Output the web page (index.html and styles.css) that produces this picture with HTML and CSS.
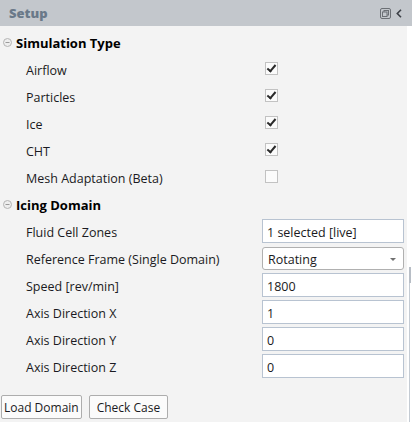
FILE: index.html
```html
<!DOCTYPE html>
<html>
<head>
<meta charset="utf-8">
<link rel="stylesheet" href="styles.css">
</head>
<body>
<div class="header">
  <span class="title">Setup</span>
  <span class="tools">
    <svg class="restore" width="11" height="11" viewBox="0 0 11 11">
      <rect x="0.5" y="0.5" width="10" height="10" rx="1.5" fill="none" stroke="#6b6f74" stroke-width="1"/>
      <rect x="4" y="2.5" width="4.5" height="4.5" fill="none" stroke="#6b6f74" stroke-width="1"/>
      <rect x="2.5" y="4" width="4.5" height="4.5" fill="#c3c7cc" stroke="#6b6f74" stroke-width="1"/>
    </svg>
    <svg class="chev" width="6" height="9" viewBox="0 0 6 9">
      <path d="M5 0.8 L1.3 4.5 L5 8.2" fill="none" stroke="#3c4046" stroke-width="1.6"/>
    </svg>
  </span>
</div>
<div class="main">
  <div class="content">
    <div class="section">
      <svg class="toggle" width="9" height="9" viewBox="0 0 9 9"><circle cx="4.5" cy="4.5" r="4" fill="#eeeeee" stroke="#b5b5b5"/><path d="M2.5 4.5 H6.5" stroke="#9a9a9a" stroke-width="1"/></svg>
      <span>Simulation Type</span>
    </div>
    <div class="row"><span class="label">Airflow</span><span class="cb on"></span></div>
    <div class="row"><span class="label">Particles</span><span class="cb on"></span></div>
    <div class="row"><span class="label">Ice</span><span class="cb on"></span></div>
    <div class="row"><span class="label">CHT</span><span class="cb on"></span></div>
    <div class="row"><span class="label">Mesh Adaptation (Beta)</span><span class="cb"></span></div>
    <div class="section">
      <svg class="toggle" width="9" height="9" viewBox="0 0 9 9"><circle cx="4.5" cy="4.5" r="4" fill="#eeeeee" stroke="#b5b5b5"/><path d="M2.5 4.5 H6.5" stroke="#9a9a9a" stroke-width="1"/></svg>
      <span>Icing Domain</span>
    </div>
    <div class="row"><span class="label">Fluid Cell Zones</span><span class="field">1 selected [live]</span></div>
    <div class="row"><span class="label">Reference Frame (Single Domain)</span><span class="select">Rotating<span class="arrow"></span></span></div>
    <div class="row"><span class="label">Speed [rev/min]</span><span class="field">1800</span></div>
    <div class="row"><span class="label">Axis Direction X</span><span class="field">1</span></div>
    <div class="row"><span class="label">Axis Direction Y</span><span class="field">0</span></div>
    <div class="row"><span class="label">Axis Direction Z</span><span class="field">0</span></div>
    <div class="buttons">
      <button class="btn">Load Domain</button>
      <button class="btn wide">Check Case</button>
    </div>
  </div>
  <div class="side"><div class="track"><div class="thumb"></div></div></div>
</div>
</body>
</html>
```
FILE: styles.css
```css
html, body {
  margin: 0;
  padding: 0;
}
body {
  width: 412px;
  height: 422px;
  overflow: hidden;
  background: #ffffff;
  font-family: "Open Sans", "Noto Sans", sans-serif;
  font-size: 12.5px;
  color: #1a1a22;
}
.header {
  height: 26px;
  background: #c3c7cc;
  display: flex;
  align-items: center;
  justify-content: space-between;
  padding: 0 10px 0 9px;
}
.title {
  font-family: "Open Sans", sans-serif;
  font-weight: 800;
  font-size: 13px;
  color: #6a7989;
}
.tools {
  display: flex;
  align-items: center;
  gap: 5px;
}
.main {
  display: flex;
  height: 396px;
}
.content {
  width: 407px;
  background: #f3f3f3;
  padding-top: 4px;
  box-sizing: border-box;
}
.side {
  width: 5px;
  padding-top: 241px;
  box-sizing: border-box;
}
.track {
  margin-left: 2px;
  width: 2px;
  height: 160px;
  border-left: 1px solid #c4cbd3;
  display: flex;
  flex-direction: column;
}
.thumb {
  height: 16px;
  width: 2px;
  background: #b8bec6;
  margin-left: -1px;
}
.section {
  height: 27px;
  box-sizing: border-box;
  padding: 0 0 1px 3px;
  display: flex;
  align-items: center;
  gap: 4px;
  font-weight: bold;
  font-size: 13px;
  color: #000;
}
.toggle {
  margin-top: -2px;
}
.row {
  height: 27px;
  display: flex;
  align-items: flex-start;
  padding-left: 26px;
}
.label {
  width: 236px;
  height: 24px;
  line-height: 24px;
  padding-top: 2px;
  box-sizing: border-box;
  flex: none;
  white-space: nowrap;
}
.cb {
  width: 13px;
  height: 13px;
  box-sizing: border-box;
  border: 1px solid #c2c2c2;
  background: #fbfbfb;
  margin: 5px 0 0 3px;
  position: relative;
}
.cb.on::after {
  content: "";
  position: absolute;
  left: 3px;
  top: 0px;
  width: 3px;
  height: 7px;
  border-right: 2.5px solid #2a2a2a;
  border-bottom: 2.5px solid #2a2a2a;
  transform: rotate(40deg);
}
.field {
  width: 142px;
  height: 24px;
  box-sizing: border-box;
  border: 1px solid #b8c3d1;
  background: #ffffff;
  line-height: 23px;
  padding: 1px 0 0 4px;
}
.select {
  width: 142px;
  height: 23px;
  margin-top: 1px;
  box-sizing: border-box;
  border: 1px solid #b0b0b0;
  border-radius: 3px;
  background: #ffffff;
  line-height: 21px;
  padding: 1px 0 0 5px;
  display: flex;
  justify-content: space-between;
  align-items: center;
}
.arrow {
  width: 0;
  height: 0;
  border-left: 3.5px solid transparent;
  border-right: 3.5px solid transparent;
  border-top: 3.5px solid #707070;
  margin-right: 7px;
}
.buttons {
  display: flex;
  gap: 7px;
  padding: 14px 0 0 1px;
}
.btn {
  font-family: inherit;
  font-size: 12px;
  color: #1a1a22;
  height: 24px;
  padding: 0 2px;
  border: 1px solid #adadad;
  border-radius: 2px;
  background: #fbfbfb;
}
.btn.wide {
  padding: 0 7px;
}
```
